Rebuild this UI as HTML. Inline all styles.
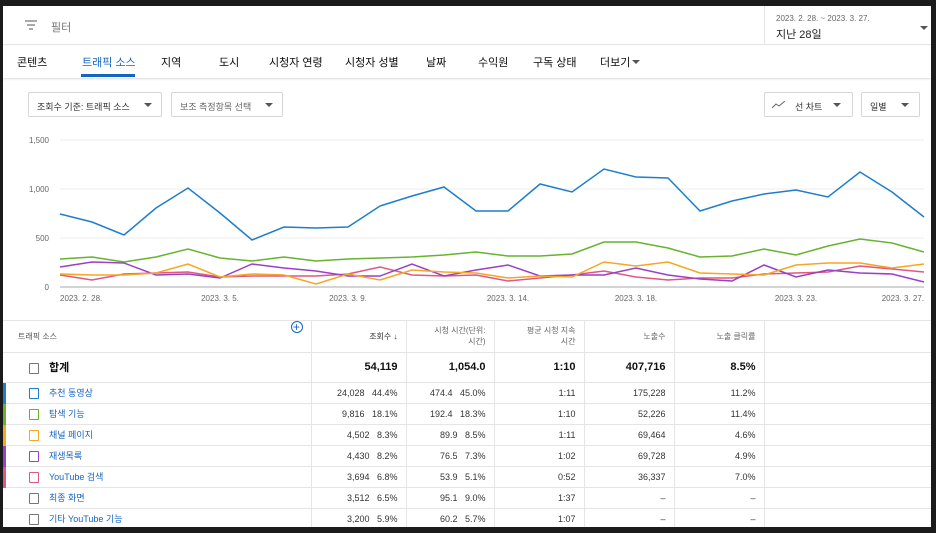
<!DOCTYPE html>
<html><head><meta charset="utf-8"><style>
*{box-sizing:border-box;margin:0;padding:0}
body{width:936px;height:533px;background:#1b1b1b;font-family:"Liberation Sans","Noto Sans CJK KR",sans-serif;position:relative;overflow:hidden;color:#0d0d0d}
.page{position:absolute;left:3px;top:6px;width:928px;height:521px;background:#fff;overflow:hidden}
.abs{position:absolute;white-space:nowrap}
.hdr{position:absolute;left:0;top:0;width:928px;height:39px;border-bottom:1px solid #e5e5e5}
.tabs{position:absolute;left:0;top:40px;width:928px;height:32px;box-shadow:0 1px 2px rgba(0,0,0,.15)}
.tab{position:absolute;top:8px;font-size:11px;color:#0d0d0d}
.btn{position:absolute;border:1px solid #d6d6d6;border-radius:2px;height:25px;font-size:9px;color:#333;padding:7px 8px}
.tri{position:absolute;width:0;height:0;border-left:4px solid transparent;border-right:4px solid transparent;border-top:4px solid #555}
table{position:absolute;left:0;top:315px;border-collapse:collapse;width:928px;font-size:9px}
td{border-bottom:1px solid #e5e5e5;height:21px;padding:0 8px;text-align:right;color:#333}
td.c{border-right:1px solid #e5e5e5}
.cb{display:inline-block;width:10px;height:11px;border:1.5px solid #777;border-radius:1px;vertical-align:middle;margin-right:10px}
.nm{color:#1565c0}
.bar{position:absolute;left:0;width:3px}
</style></head><body><div class="page">
<div class="hdr">
 <svg class="abs" style="left:22px;top:14px" width="12" height="10"><path d="M0 1h12M2 5h8M4 9h4" stroke="#777" stroke-width="1.3"/></svg>
 <div class="abs" style="left:48px;top:13px;font-size:11px;color:#777">필터</div>
 <div class="abs" style="left:761px;top:0;width:1px;height:39px;background:#e5e5e5"></div>
 <div class="abs" style="left:773px;top:8px;font-size:8px;color:#666">2023. 2. 28. ~ 2023. 3. 27.</div>
 <div class="abs" style="left:773px;top:20px;font-size:11px;color:#222">지난 28일</div>
 <div class="tri" style="left:917px;top:20px"></div>
</div>
<div class="tabs">
 <div class="tab" style="left:14px">콘텐츠</div>
 <div class="tab" style="left:79px;color:#1565c0">트래픽 소스</div>
 <div class="abs" style="left:78px;top:28px;width:54px;height:3px;background:#1565c0"></div>
 <div class="tab" style="left:158px">지역</div>
 <div class="tab" style="left:216px">도시</div>
 <div class="tab" style="left:266px">시청자 연령</div>
 <div class="tab" style="left:342px">시청자 성별</div>
 <div class="tab" style="left:423px">날짜</div>
 <div class="tab" style="left:475px">수익원</div>
 <div class="tab" style="left:530px">구독 상태</div>
 <div class="tab" style="left:597px">더보기</div>
 <div class="tri" style="left:629px;top:14px"></div>
</div>
<div class="btn" style="left:25px;top:86px;width:134px">조회수 기준: 트래픽 소스</div><div class="tri" style="left:141px;top:97px"></div>
<div class="btn" style="left:168px;top:86px;width:112px;color:#666">보조 측정항목 선택</div><div class="tri" style="left:262px;top:97px"></div>
<div class="btn" style="left:761px;top:86px;width:89px;padding-left:30px">선 차트</div><svg class="abs" style="left:769px;top:95px" width="14" height="8"><path d="M0 7l4-4 3 2 6-5" stroke="#666" fill="none" stroke-width="1"/></svg><div class="tri" style="left:830px;top:97px"></div>
<div class="btn" style="left:858px;top:86px;width:59px">일별</div><div class="tri" style="left:898px;top:97px"></div>
<svg class="abs" style="left:0;top:0" width="928" height="310" viewBox="3 6 928 310">
 <g font-size="8" fill="#666" font-family="Liberation Sans">
 <text x="49" y="143" text-anchor="end">1,500</text><text x="49" y="192" text-anchor="end">1,000</text><text x="49" y="241" text-anchor="end">500</text><text x="49" y="290" text-anchor="end">0</text>
 <text x="60" y="301">2023. 2. 28.</text><text x="220" y="301" text-anchor="middle">2023. 3. 5.</text><text x="348" y="301" text-anchor="middle">2023. 3. 9.</text><text x="508" y="301" text-anchor="middle">2023. 3. 14.</text><text x="636" y="301" text-anchor="middle">2023. 3. 18.</text><text x="796" y="301" text-anchor="middle">2023. 3. 23.</text><text x="924" y="301" text-anchor="end">2023. 3. 27.</text>
 </g>
 <g stroke="#eee"><path d="M60 140H924M60 189H924M60 238H924"/></g>
 <path d="M60 287H924" stroke="#aaa"/>
 <g fill="none" stroke-width="1.5">
 <polyline stroke="#e0577f" points="60,275 92,280 124,274 156,273 188,272 220,277 252,276 284,276 316,276 348,274 380,267 412,275 444,276 476,275 508,281 540,278 572,275 604,271 636,277 668,280 700,278 732,278 764,274 796,273 828,272 860,266 892,269 924,272"/>
 <polyline stroke="#9a3fc7" points="60,267 92,262 124,263 156,275 188,274 220,278 252,264 284,268 316,271 348,276 380,276 412,264 444,276 476,270 508,265 540,276 572,275 604,275 636,268 668,275 700,279 732,281 764,265 796,277 828,270 860,273 892,274 924,282"/>
 <polyline stroke="#f5a623" points="60,274 92,275 124,275 156,273 188,264 220,277 252,274 284,275 316,284 348,274 380,280 412,270 444,272 476,273 508,278 540,276 572,277 604,262 636,266 668,262 700,273 732,274 764,275 796,265 828,263 860,263 892,268 924,264"/>
 <polyline stroke="#66b32e" points="60,259 92,257 124,262 156,257 188,249 220,258 252,261 284,257 316,261 348,259 380,258 412,257 444,255 476,252 508,256 540,256 572,254 604,242 636,242 668,248 700,257 732,256 764,249 796,255 828,246 860,239 892,243 924,252"/>
 <polyline stroke="#1e7dcc" points="60,214 92,222 124,235 156,208 188,188 220,213 252,240 284,227 316,228 348,227 380,206 412,196 444,187 476,211 508,211 540,184 572,192 604,169 636,177 668,178 700,211 732,201 764,194 796,190 828,197 860,172 892,192 924,217"/>
 </g>
</svg>
<div class="abs" style="left:0;top:314px;width:928px;height:1px;background:#e5e5e5"></div>
<table>
<tr style="height:31px"><td style="text-align:left;font-size:8px;color:#555;padding-left:15px" class="c">트래픽 소스<span style="float:right;color:#1565c0;font-size:12px;border:1px solid #1565c0;border-radius:50%;width:12px;height:12px;line-height:10px;text-align:center;margin-top:-10px">+</span></td><td class="c" style="width:95px;font-size:8px">조회수 ↓</td><td class="c" style="width:88px;font-size:8px;color:#666">시청 시간(단위:<br>시간)</td><td class="c" style="width:90px;font-size:8px;color:#666">평균 시청 지속<br>시간</td><td class="c" style="width:90px;font-size:8px;color:#666">노출수</td><td class="c" style="width:90px;font-size:8px;color:#666">노출 클릭률</td><td></td></tr>
<tr style="height:30px;font-weight:bold;font-size:11px"><td class="c" style="text-align:left;padding-left:26px;color:#111;font-size:11px;width:308px"><span class="cb"></span>합계</td><td class="c" style="color:#111">54,119</td><td class="c" style="color:#111">1,054.0</td><td class="c" style="color:#111">1:10</td><td class="c" style="color:#111">407,716</td><td class="c" style="color:#111">8.5%</td><td></td></tr>
<tr><td class="c" style="text-align:left;padding-left:26px;position:relative"><div class="bar" style="top:0;height:21px;background:#1e7dcc"></div><span class="cb" style="border-color:#1e7dcc"></span><span class="nm">추천 동영상</span></td><td class="c">24,028 &nbsp; 44.4%</td><td class="c">474.4 &nbsp; 45.0%</td><td class="c">1:11</td><td class="c">175,228</td><td class="c">11.2%</td><td></td></tr>
<tr><td class="c" style="text-align:left;padding-left:26px;position:relative"><div class="bar" style="top:0;height:21px;background:#66b32e"></div><span class="cb" style="border-color:#66b32e"></span><span class="nm">탐색 기능</span></td><td class="c">9,816 &nbsp; 18.1%</td><td class="c">192.4 &nbsp; 18.3%</td><td class="c">1:10</td><td class="c">52,226</td><td class="c">11.4%</td><td></td></tr>
<tr><td class="c" style="text-align:left;padding-left:26px;position:relative"><div class="bar" style="top:0;height:21px;background:#f5a623"></div><span class="cb" style="border-color:#f5a623"></span><span class="nm">채널 페이지</span></td><td class="c">4,502 &nbsp; 8.3%</td><td class="c">89.9 &nbsp; 8.5%</td><td class="c">1:11</td><td class="c">69,464</td><td class="c">4.6%</td><td></td></tr>
<tr><td class="c" style="text-align:left;padding-left:26px;position:relative"><div class="bar" style="top:0;height:21px;background:#9a3fc7"></div><span class="cb" style="border-color:#9a3fc7"></span><span class="nm">재생목록</span></td><td class="c">4,430 &nbsp; 8.2%</td><td class="c">76.5 &nbsp; 7.3%</td><td class="c">1:02</td><td class="c">69,728</td><td class="c">4.9%</td><td></td></tr>
<tr><td class="c" style="text-align:left;padding-left:26px;position:relative"><div class="bar" style="top:0;height:21px;background:#e0577f"></div><span class="cb" style="border-color:#e0577f"></span><span class="nm">YouTube 검색</span></td><td class="c">3,694 &nbsp; 6.8%</td><td class="c">53.9 &nbsp; 5.1%</td><td class="c">0:52</td><td class="c">36,337</td><td class="c">7.0%</td><td></td></tr>
<tr><td class="c" style="text-align:left;padding-left:26px"><span class="cb"></span><span class="nm">최종 화면</span></td><td class="c">3,512 &nbsp; 6.5%</td><td class="c">95.1 &nbsp; 9.0%</td><td class="c">1:37</td><td class="c">–</td><td class="c">–</td><td></td></tr>
<tr><td class="c" style="text-align:left;padding-left:26px"><span class="cb"></span><span class="nm">기타 YouTube 기능</span></td><td class="c">3,200 &nbsp; 5.9%</td><td class="c">60.2 &nbsp; 5.7%</td><td class="c">1:07</td><td class="c">–</td><td class="c">–</td><td></td></tr>
</table>
</div></body></html>
